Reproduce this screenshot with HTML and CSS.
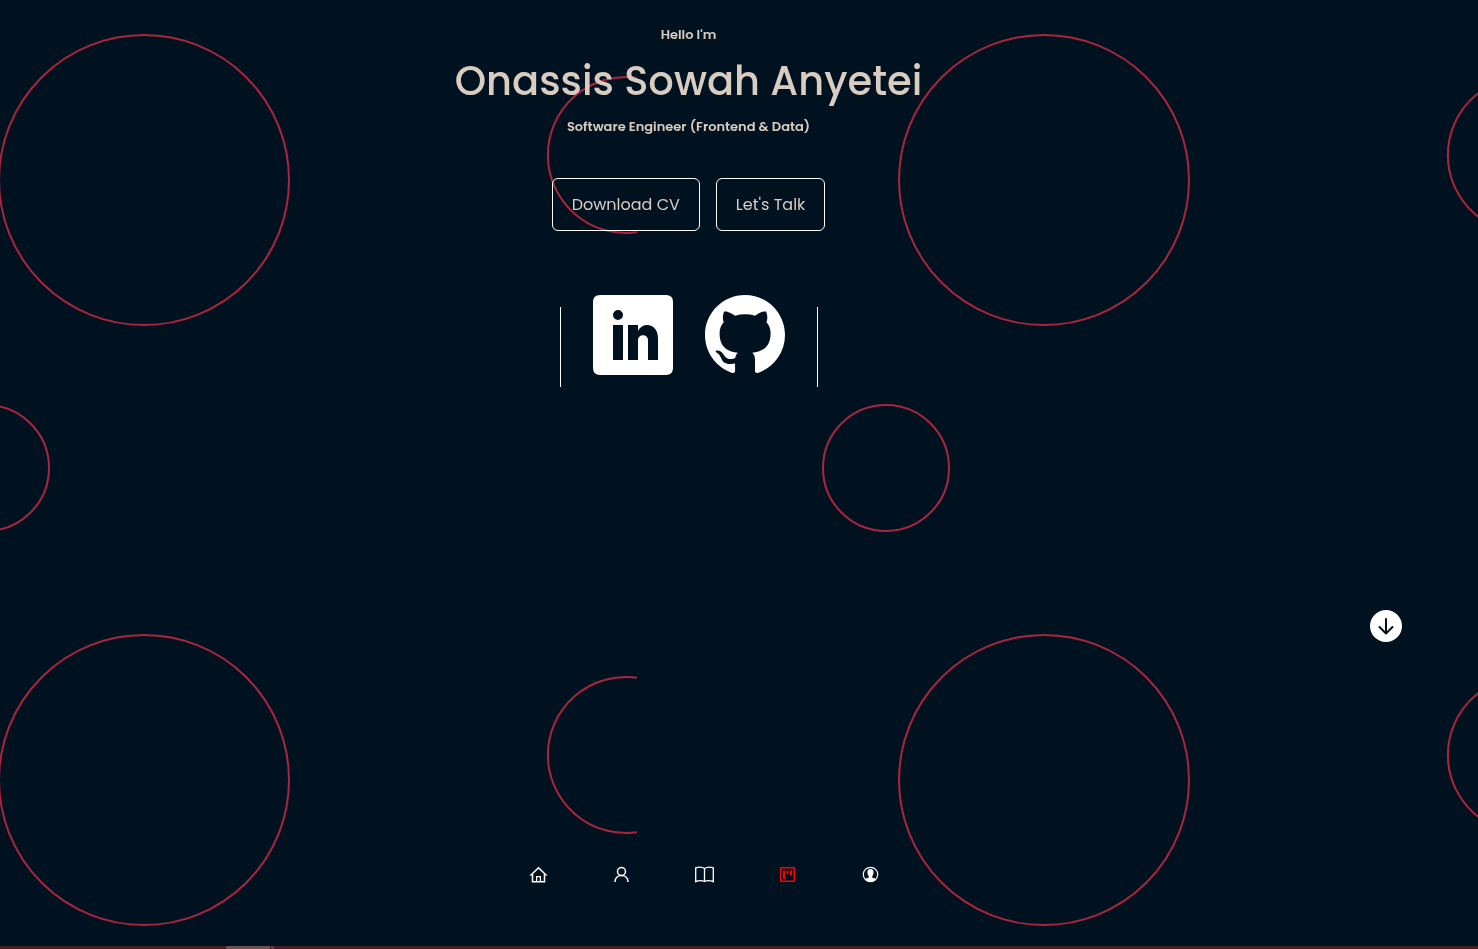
FILE: index.html
```html
<!DOCTYPE html>
<html lang="en">
<head>
<meta charset="utf-8">
<meta name="viewport" content="width=device-width, initial-scale=1">
<title>Onassis Sowah Anyetei</title>
<link rel="stylesheet" href="styles.css">
</head>
<body>
<svg class="backdrop" aria-hidden="true">
  <defs>
    <pattern id="rings" width="900" height="600" patternUnits="userSpaceOnUse">
      <g fill="none" stroke="#a9243d" stroke-width="2">
        <circle cx="144" cy="180" r="145"/>
        <circle cx="1044" cy="180" r="145"/>
        <path d="M637 77.8A78 78 0 1 0 637 232.2"/>
        <circle cx="-14" cy="468" r="63"/>
        <circle cx="886" cy="468" r="63"/>
      </g>
    </pattern>
  </defs>
  <rect width="100%" height="100%" fill="url(#rings)"/>
</svg>

<div class="page">
  <header class="hero">
    <h5 class="hero-note">Hello I'm</h5>
    <h1 class="hero-name">Onassis Sowah Anyetei</h1>
    <h5 class="hero-note">Software Engineer (Frontend &amp; Data)</h5>
    <div class="cta">
      <a class="btn" href="#cv">Download CV</a>
      <a class="btn" href="#contact">Let's Talk</a>
    </div>
    <div class="socials">
      <span class="rule"></span>
      <a class="social" href="#linkedin" aria-label="LinkedIn">
        <svg viewBox="0 0 80 80"><path fill-rule="evenodd" d="M7 0H73Q80 0 80 7V73Q80 80 73 80H7Q0 80 0 73V7Q0 0 7 0ZM25 15A5 5 0 1 0 25 25A5 5 0 1 0 25 15ZM20 30V65H30V30ZM35 30V65H45V45C45 38.500 55 38.500 55 45V65H65V43C65 29 50 26 45 36V30Z"/></svg>
      </a>
      <a class="social" href="#github" aria-label="GitHub">
        <svg viewBox="0 0 16 16"><path d="M8 0C3.580 0 0 3.580 0 8c0 3.540 2.290 6.530 5.470 7.590.4.070.55-.17.55-.38 0-.19-.01-.82-.01-1.490-2.010.37-2.530-.49-2.690-.94-.09-.23-.48-.94-.82-1.130-.28-.15-.68-.52-.01-.53.63-.01 1.080.58 1.230.82.72 1.210 1.870.87 2.330.66.07-.52.28-.87.51-1.070-1.780-.2-3.640-.89-3.640-3.950 0-.87.31-1.590.82-2.150-.08-.2-.36-1.020.08-2.120 0 0 .67-.21 2.200.82.64-.18 1.320-.27 2-.27s1.360.09 2 .27c1.530-1.040 2.200-.82 2.200-.82.44 1.100.16 1.920.08 2.120.51.56.82 1.270.82 2.150 0 3.070-1.870 3.750-3.650 3.950.29.25.54.73.54 1.480 0 1.070-.01 1.930-.01 2.200 0 .21.15.46.55.38A8.010 8.010 0 0 0 16 8c0-4.420-3.580-8-8-8z"/></svg>
      </a>
      <span class="rule"></span>
    </div>
  </header>

  <a class="scroll-down" href="#about" aria-label="Scroll down">
    <svg viewBox="0 0 32 32"><circle cx="16" cy="16" r="16" fill="#fff"/><path d="M16 9V23.500M9.500 17L16 23.500L22.500 17" fill="none" stroke="#00121f" stroke-width="2" stroke-linecap="round" stroke-linejoin="round"/></svg>
  </a>

  <nav class="nav" aria-label="Main">
    <a class="nav-link" href="#home" aria-label="Home"><svg viewBox="0 0 20 20"><path d="M2.200 9.800L9.500 2.700L16.800 9.800H15.500V16.800H3.500V9.800Z"/><path stroke-width="1.200" d="M7.600 16.800V11.700H11.400V16.800"/></svg></a>
    <a class="nav-link" href="#about" aria-label="About"><svg viewBox="0 0 20 20"><circle cx="9.500" cy="6.500" r="4"/><path d="M3 17C3 8.400 16 8.400 16 17"/></svg></a>
    <a class="nav-link" href="#experience" aria-label="Experience"><svg viewBox="0 0 20 20"><path d="M9.500 3.500C7 1.800 3.500 1.800 .7 2.800V16.700C3.500 15.500 7 15.500 9.500 16.500C12 15.500 15.500 15.500 18.300 16.700V2.800C15.500 1.800 12 1.800 9.500 3.500V16.500" stroke-width="1.300"/></svg></a>
    <a class="nav-link current" href="#portfolio" aria-label="Portfolio"><svg viewBox="0 0 20 20"><rect x="2.700" y="2.700" width="13.600" height="13.600" rx=".5"/><path d="M6 5.500V14M9.500 5.500V9M13 5.500V10.500" stroke-width="2"/></svg></a>
    <a class="nav-link" href="#contact" aria-label="Contact"><svg viewBox="0 0 20 20"><circle cx="9.500" cy="9.500" r="7.200" stroke-width="1.200"/><path fill="#fff" stroke="none" d="M9.500 4C7 4 6.100 5.800 6.500 8C6.700 9.500 7 10.500 7.800 11.200V12.500C6.500 13 4.500 13.500 3.800 14.500C6.500 17.800 12.500 17.800 15.200 14.500C14.500 13.500 12.500 13 11.200 12.500V11.200C12 10.500 12.300 9.500 12.500 8C12.900 5.800 12 4 9.500 4Z"/></svg></a>
  </nav>
</div>
<div class="edge"><span class="edge-thumb"></span><span class="edge-tip"></span></div>
</body>
</html>
```
FILE: styles.css
```css
* {
  box-sizing: border-box;
  margin: 0;
  padding: 0;
}

body {
  display: flex;
  flex-direction: column;
  min-height: 100vh;
  background: #00121f;
  color: #d9cdc2;
  font-family: Poppins, Inter, sans-serif;
}

a {
  color: inherit;
  text-decoration: none;
}

svg {
  display: block;
}

.backdrop {
  position: fixed;
  inset: 0;
  z-index: -1;
  width: 100%;
  height: 100%;
}

.page {
  display: flex;
  flex: 1;
  flex-direction: column;
}

.hero {
  display: flex;
  flex-direction: column;
  align-items: center;
  padding: 24px 101px 0 0;
}

.hero-note {
  font-size: 13px;
  font-weight: 600;
  line-height: 22px;
}

.hero-name {
  font-size: 40px;
  font-weight: 500;
  line-height: 70px;
  text-align: center;
}

.cta {
  display: flex;
  gap: 16px;
  margin-top: 40px;
}

.btn {
  padding: 12px 19px;
  border: 1px solid #fff;
  border-radius: 6px;
  font-size: 16px;
  line-height: 27px;
}

.socials {
  display: flex;
  gap: 32px;
  margin-top: 64px;
}

.social {
  width: 80px;
  height: 80px;
  fill: #fff;
}

.rule {
  width: 1px;
  height: 80px;
  margin-top: 12px;
  background: #fff;
}

.scroll-down {
  align-self: flex-end;
  width: 32px;
  margin: 223px 76px 0 0;
}

.nav {
  display: flex;
  justify-content: center;
  gap: 63px;
  margin-top: auto;
  padding: 0 69px 61px 0;
}

.nav-link {
  width: 20px;
  height: 20px;
  fill: none;
  stroke: #fff;
  stroke-width: 1.5px;
}

.current {
  stroke: #f00;
}

.edge {
  display: flex;
  gap: 1px;
  height: 3px;
  padding-left: 226px;
  background: #431f1d;
}

.edge-thumb {
  width: 44px;
  background: #6a504f;
}

.edge-tip {
  width: 3px;
  background: #5a403e;
}
```
